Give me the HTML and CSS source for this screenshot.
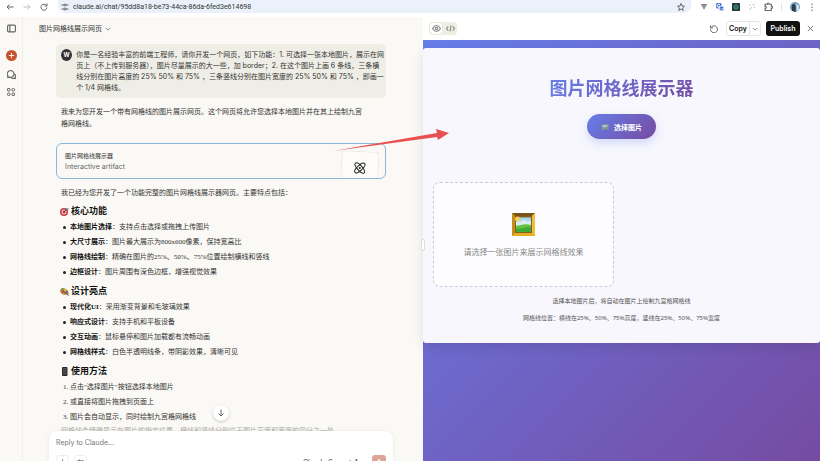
FILE: index.html
```html
<!DOCTYPE html>
<html lang="zh-CN">
<head>
    <meta charset="UTF-8">
    <meta name="viewport" content="width=device-width, initial-scale=1.0">
    <title>图片网格线展示网页</title>
    <link rel="stylesheet" href="styles.css">
</head>
<body>

    <!-- Browser bar -->
    <div class="browser-bar">
        <button class="icon-btn" aria-label="Back"><svg width="8" height="8" viewBox="0 0 16 16"><path d="M15 8H2M7 3L2 8l5 5"/></svg></button>
        <button class="icon-btn faded" aria-label="Forward"><svg width="8" height="8" viewBox="0 0 16 16"><path d="M1 8h13M9 3l5 5-5 5"/></svg></button>
        <button class="icon-btn" aria-label="Reload"><svg width="8" height="8" viewBox="0 0 16 16"><path d="M13 5a6 6 0 1 0 1 4M14 1v5H9"/></svg></button>
        <div class="url-box">
            <svg width="8" height="8" viewBox="0 0 16 16"><path d="M1 4h5M10 4h5M1 12h5M10 12h5"/><circle cx="8" cy="4" r="2"/><circle cx="8" cy="12" r="2"/></svg>
            <input type="text" class="url" aria-label="Address" value="claude.ai/chat/95dd8a18-be73-44ca-86da-6fed3e614698">
            <svg width="8" height="8" viewBox="0 0 16 16"><path d="M8 1l2 5 5 .500-4 3.500 1.500 5L8 12l-4.500 3L5 10 1 6.500 6 6z"/></svg>
        </div>
        <div class="extensions">
            <svg width="8" height="8" viewBox="0 0 16 16"><path d="M1 2h4l3 5 3-5h4L8 14z" fill="#999" stroke="none"/><path d="M5 2h2l1 2 1-2h2L8 7z" fill="#555" stroke="none"/></svg>
            <svg width="8" height="8" viewBox="0 0 16 16"><rect width="11" height="11" rx="2" fill="#4a7fe0" stroke="none"/><rect x="6" y="6" width="10" height="10" rx="2" fill="#c5d6f5" stroke="none"/><path d="M8 4a3 3 0 1 0 0 3H6" stroke="#fff"/><path d="M8 9h6M11 8v1c0 2-1 4-3 5M9 10l5 4" stroke="#3b6bc4"/></svg>
            <svg width="8" height="8" viewBox="0 0 16 16"><rect width="16" height="16" rx="1" fill="#203a3d" stroke="none"/><circle cx="8" cy="8" r="4" stroke="#2fa58e"/><circle cx="8" cy="8" r="1" fill="#2fa58e"/></svg>
            <svg class="faded" width="8" height="8" viewBox="0 0 16 16"><path d="M2 3l3 2M9 3l4 0M8 8l-5 6M13 7v3"/></svg>
            <svg width="9" height="9" viewBox="0 0 16 16"><path d="M2 4h4c-1-3 4-3 3 0h4v4c3-1 3 4 0 3v4H2v-4c3 1 3-4 0-3z"/></svg>
            <span class="bar-divider"></span>
            <svg width="10" height="10" viewBox="0 0 16 16"><circle cx="8" cy="8" r="8" fill="#76a3bd" stroke="none"/><path d="M3 14V7c0-5 6-5 6 0v9z" fill="#2d3b48" stroke="none"/><path d="M10 3l4 2v7l-3 3z" fill="#dde8ed" stroke="none"/></svg>
            <button class="icon-btn" aria-label="Menu"><svg width="8" height="8" viewBox="0 0 16 16"><path d="M8 1v3M8 7v3M8 13v3"/></svg></button>
        </div>
    </div>

    <div class="container">
        <!-- Sidebar -->
        <nav class="sidebar">
            <button class="icon-btn" aria-label="Toggle sidebar"><svg width="9" height="9" viewBox="0 0 16 16"><rect x="1" y="2" width="14" height="12" rx="2"/><path d="M5 2v12"/></svg></button>
            <button class="new-chat" aria-label="New chat"><svg width="7" height="7" viewBox="0 0 16 16"><path d="M8 2v12M2 8h12"/></svg></button>
            <button class="icon-btn" aria-label="Chats"><svg width="9" height="9" viewBox="0 0 16 16"><path d="M2 11a6 6 0 1 1 4 2H1zM13 7c3 2 3 5 1 6l1 2h-4c-2 0-3-1-4-2"/></svg></button>
            <button class="icon-btn" aria-label="Artifacts"><svg width="8" height="8" viewBox="0 0 16 16"><rect x="1" y="1" width="5" height="5" rx="1"/><rect x="10" y="1" width="5" height="5" rx="2"/><rect x="1" y="10" width="5" height="5" rx="2"/><rect x="10" y="10" width="5" height="5" rx="1"/></svg></button>
        </nav>

        <!-- Chat -->
        <main class="chat">
            <header class="chat-header">
                <button class="chat-title">图片网格线展示网页 <svg width="6" height="6" viewBox="0 0 16 16"><path d="M2 5l6 6 6-6"/></svg></button>
            </header>

            <div class="messages">
                <div class="user-message">
                    <span class="avatar">W</span>
                    <p>你是一名经验丰富的前端工程师，请你开发一个网页，如下功能：1. 可选择一张本地图片，展示在网<br>页上（不上传到服务器），图片尽量展示的大一些，加 border；2. 在这个图片上画 6 条线，三条横<br>线分别在图片高度的 25% 50% 和 75% ，三条竖线分别在图片宽度的 25% 50% 和 75% ，即画一<br>个 1/4 网格线。</p>
                </div>

                <div class="reply">
                    <p>我来为您开发一个带有网格线的图片展示网页。这个网页将允许您选择本地图片并在其上绘制九宫<br>格网格线。</p>

                    <button class="artifact-card">
                        <span class="artifact-info">
                            <span class="artifact-name">图片网格线展示器</span>
                            <span class="artifact-type">Interactive artifact</span>
                        </span>
                        <span class="artifact-thumb">
                            <svg width="12" height="12" viewBox="0 0 24 24"><ellipse cx="12" cy="12" rx="13" ry="5" transform="rotate(45 12 12)"/><ellipse cx="12" cy="12" rx="13" ry="5" transform="rotate(-45 12 12)"/><circle cx="12" cy="12" r="1"/></svg>
                        </span>
                    </button>

                    <p>我已经为您开发了一个功能完整的图片网格线展示器网页。主要特点包括：</p>

                    <h3>
                        <svg class="emoji" width="9" height="9" viewBox="0 0 18 18"><circle cx="8" cy="10" r="8" fill="#c8373b"/><circle cx="8" cy="10" r="5" fill="#f3d9d6"/><circle cx="8" cy="10" r="3" fill="#c8373b"/><path d="M8 10l6-6" stroke="#4b3a35" stroke-width="2"/><path d="M12 5l1-4 2 2 3 0-3 4z" fill="#4c91ba"/></svg>
                        核心功能
                    </h3>
                    <ul>
                        <li><strong>本地图片选择</strong>：支持点击选择或拖拽上传图片</li>
                        <li><strong>大尺寸展示</strong>：图片最大展示为800x600像素，保持宽高比</li>
                        <li><strong>网格线绘制</strong>：精确在图片的25%、50%、75%位置绘制横线和竖线</li>
                        <li><strong>边框设计</strong>：图片周围有深色边框，增强视觉效果</li>
                    </ul>

                    <h3>
                        <svg class="emoji" width="9" height="9" viewBox="0 0 18 18"><path d="M1 5c3-5 11-3 15 3 3 5 1 8-2 7-2-1-3-1-4 1C6 17-2 11 1 5z" fill="#c18847"/><circle cx="5" cy="5" r="2" fill="#3f9b55"/><circle cx="10" cy="6" r="2" fill="#e9c63c"/><circle cx="4" cy="10" r="2" fill="#ce4336"/><circle cx="14" cy="10" r="2" fill="#456db5"/><path d="M6 8l11 9" stroke="#70422e" stroke-width="2"/></svg>
                        设计亮点
                    </h3>
                    <ul>
                        <li><strong>现代化UI</strong>：采用渐变背景和毛玻璃效果</li>
                        <li><strong>响应式设计</strong>：支持手机和平板设备</li>
                        <li><strong>交互动画</strong>：鼠标悬停和图片加载都有流畅动画</li>
                        <li><strong>网格线样式</strong>：白色半透明线条，带阴影效果，清晰可见</li>
                    </ul>

                    <h3>
                        <svg class="emoji" width="9" height="9" viewBox="0 0 18 18"><rect x="4" width="11" height="18" rx="2" fill="#262626"/><rect x="6" y="2" width="7" height="13" fill="#555"/><path d="M7 5h5M7 8h5M7 11h5" stroke="#222" stroke-width="1"/></svg>
                        使用方法
                    </h3>
                    <ol>
                        <li>点击"选择图片"按钮选择本地图片</li>
                        <li>或直接将图片拖拽到页面上</li>
                        <li>图片会自动显示，同时绘制九宫格网格线</li>
                    </ol>
                    <p class="closing">网格线会精确显示在图片的指定位置，横线和竖线分别位于图片高度和宽度的四分之一处。</p>
                </div>
                <button class="scroll-down" aria-label="Scroll to bottom"><svg width="8" height="8" viewBox="0 0 16 16"><path d="M8 1v13M3 9l5 5 5-5"/></svg></button>
            </div>

            <form class="composer">
                <input type="text" aria-label="Message" placeholder="Reply to Claude...">
                <div class="composer-tools">
                    <button type="button" class="tool" aria-label="Add"><svg width="7" height="7" viewBox="0 0 16 16"><path d="M8 1v14M1 8h14"/></svg></button>
                    <button type="button" class="tool" aria-label="Tools"><svg width="7" height="7" viewBox="0 0 16 16"><path d="M1 4h14M1 11h14M5 1v6M11 8v6"/></svg></button>
                    <button type="button" class="model">Claude Sonnet 4</button>
                    <button type="submit" class="send" aria-label="Send"><svg width="8" height="8" viewBox="0 0 16 16"><path d="M8 15V3M3 8l5-5 5 5"/></svg></button>
                </div>
            </form>
        </main>

        <!-- Artifact -->
        <section class="artifact">
            <header class="artifact-header">
                <div class="view-toggle">
                    <button class="active" aria-label="Preview"><svg width="9" height="9" viewBox="0 0 16 16"><path d="M1 8c4-7 10-7 14 0-4 7-10 7-14 0z"/><circle cx="8" cy="8" r="2"/></svg></button>
                    <button aria-label="Code"><svg width="9" height="9" viewBox="0 0 16 16"><path d="M4 4L1 8l3 4M12 4l3 4-3 4M9 3L7 13"/></svg></button>
                </div>
                <button class="icon-btn refresh" aria-label="Refresh"><svg width="8" height="8" viewBox="0 0 16 16"><path d="M2 5a7 7 0 1 1-1 4M1 1v5h5"/></svg></button>
                <div class="copy-group">
                    <button>Copy</button>
                    <button class="copy-more" aria-label="Copy options"><svg width="6" height="6" viewBox="0 0 16 16"><path d="M2 5l6 6 6-6"/></svg></button>
                </div>
                <button class="publish">Publish</button>
                <button class="icon-btn" aria-label="Close"><svg width="7" height="7" viewBox="0 0 16 16"><path d="M2 2l12 12M14 2L2 14"/></svg></button>
            </header>

            <div class="preview">
                <div class="preview-panel">
                    <h1>图片网格线展示器</h1>
                    <button class="pick-btn">
                        <svg class="emoji" width="8" height="8" viewBox="0 0 16 16"><path d="M1 3l14-1v10L2 14z" fill="#839aa5"/><path d="M2 5l11-1-5 6z" fill="#bfd0c6"/><path d="M2 13l6-5 6 4z" fill="#6d9b83"/></svg>
                        选择图片
                    </button>
                    <div class="drop-zone">
                        <svg class="emoji" width="23" height="23" viewBox="0 0 46 46"><rect width="46" height="46" rx="2" fill="#e8ac25"/><path d="M0 0h46l-6 6H6z" fill="#7b5316"/><path d="M0 0l6 6v34l-6 6z" fill="#c78d1c"/><path d="M46 0v46l-6-6V6z" fill="#f1bd3a"/><rect x="6" y="6" width="34" height="34" fill="#82601f"/><rect x="8" y="9" width="30" height="29" fill="#a8d8ed"/><circle cx="11" cy="12" r="5" fill="#f4cf55"/><path d="M8 19c4-5 7-1 10-2s5-6 9-2 5-1 11 2v8H8z" fill="#d9edf2"/><path d="M8 26c10-2 18-6 30-2v14H8z" fill="#66c044"/><path d="M8 31c12 1 20-4 30-3v10H8z" fill="#3fa934"/></svg>
                        <p>请选择一张图片来展示网格线效果</p>
                    </div>
                    <div class="hints">
                        <p>选择本地图片后，将自动在图片上绘制九宫格网格线</p>
                        <p>网格线位置：横线在25%、50%、75%高度，竖线在25%、50%、75%宽度</p>
                    </div>
                </div>
            </div>
            <span class="resize-handle"></span>
        </section>

        <!-- Arrow from the artifact card to the preview -->
        <svg class="pointer-arrow" width="116" height="28" viewBox="0 0 116 28"><path d="M0 24L104 6l-1-4 13 4-11 7-1-3z"/></svg>
    </div>

</body>
</html>
```
FILE: styles.css
```css
* {
    box-sizing: border-box;
}
body {
    font-family: Inter, "Noto Sans CJK SC", sans-serif;
    font-size: 7px;
    margin: 0;
    height: 100vh;
    display: flex;
    flex-direction: column;
    overflow: hidden;
    color: #333;
    background-color: #faf9f5;
}
h1, h3, p, ul, ol {
    margin: 0;
    padding: 0;
}
button, input {
    font: inherit;
    color: inherit;
    border: none;
    padding: 0;
    background: none;
}
button {
    display: flex;
    align-items: center;
    justify-content: center;
    cursor: pointer;
}
svg {
    display: block;
    flex-shrink: 0;
    fill: none;
    stroke: #666;
    stroke-width: 2;
}
.emoji {
    stroke: none;
}
.faded {
    opacity: 0.4;
}

/* Browser bar */
.browser-bar {
    display: flex;
    gap: 9px;
    height: 17px;
    padding: 0 4px 4px 6px;
    background-color: #fff;
    flex-shrink: 0;
}
.url-box {
    flex: 1;
    display: flex;
    align-items: center;
    gap: 4px;
    margin-left: 1px;
    padding: 0 6px 0 3px;
    background-color: #eaf1fb;
    border-radius: 0 0 7px 7px;
}
.url {
    flex: 1;
    min-width: 0;
    outline: none;
    font-family: Roboto, sans-serif;
}
.extensions {
    display: flex;
    align-items: center;
    gap: 8px;
}
.bar-divider {
    width: 1px;
    height: 8px;
    background-color: #dde3ea;
}

.container {
    flex: 1;
    min-height: 0;
    position: relative;
    display: grid;
    grid-template-columns: 23px minmax(0, 400fr) minmax(0, 397fr);
    grid-template-rows: minmax(0, 1fr);
}

/* Sidebar */
.sidebar {
    display: flex;
    flex-direction: column;
    align-items: center;
    gap: 9px;
    padding-top: 7px;
    border-right: 1px solid #efeee9;
}
.new-chat {
    width: 11px;
    height: 11px;
    margin-top: 8px;
    border-radius: 50%;
    background-color: #c6532f;
}
.new-chat svg {
    stroke: #fff;
}

/* Chat */
.chat {
    display: flex;
    flex-direction: column;
    min-height: 0;
    padding-right: 4px;
}
.chat-header {
    height: 27px;
    padding: 5px 16px;
    flex-shrink: 0;
}
.chat-title {
    gap: 3px;
    line-height: 14px;
}
.messages {
    position: relative;
    flex: 1;
    min-height: 0;
    overflow: hidden;
}
.user-message,
.reply {
    width: 330px;
    max-width: 100%;
    margin: 0 auto;
}
.user-message {
    display: flex;
    gap: 4px;
    padding: 5px 2px 5px 5px;
    line-height: 11px;
    white-space: nowrap;
    border-radius: 5px;
    background-color: #efeee6;
}
.avatar {
    width: 12px;
    height: 12px;
    line-height: 12px;
    font-size: 6px;
    font-weight: bold;
    text-align: center;
    color: #fff;
    border-radius: 50%;
    background-color: #333;
}
.reply {
    padding-top: 8px;
    font-family: "Liberation Serif", "Noto Sans CJK SC", serif;
}
.reply > p {
    padding: 0 5px;
    line-height: 12px;
}
.artifact-card {
    width: 100%;
    height: 36px;
    margin: 13px 0 8px;
    padding: 0 6px 0 8px;
    justify-content: space-between;
    overflow: hidden;
    text-align: left;
    font-family: Inter, "Noto Sans CJK SC", sans-serif;
    border: 1px solid #8ab8d8;
    border-radius: 6px;
}
.artifact-info {
    display: flex;
    flex-direction: column;
    line-height: 11px;
}
.artifact-name {
    font-size: 6px;
}
.artifact-type {
    color: #666;
}
.artifact-thumb {
    align-self: flex-end;
    width: 38px;
    height: 27px;
    padding: 10px 12px 0;
    border: 1px solid #eae9e4;
    border-bottom: none;
    border-radius: 4px 4px 0 0;
    background-color: #fdfcfa;
    transform: rotate(3deg);
}
.artifact-thumb svg {
    overflow: visible;
    stroke: #222;
}
h3 {
    display: flex;
    align-items: center;
    gap: 2px;
    margin-top: 3px;
    padding: 0 4px;
    font-size: 9px;
    line-height: 17px;
    color: #111;
}
.reply > p + h3 {
    margin-top: 4px;
}
ul, ol {
    padding-left: 14px;
    line-height: 15px;
}
ul {
    list-style: none;
}
ul li {
    position: relative;
}
ul li::before {
    content: "";
    position: absolute;
    left: -7px;
    top: 6px;
    width: 3px;
    height: 3px;
    border-radius: 50%;
    background-color: #222;
}
li strong {
    color: #111;
}
.reply .closing {
    white-space: nowrap;
    color: #aaa;
}
.scroll-down {
    position: absolute;
    left: 50%;
    bottom: 10px;
    width: 16px;
    height: 16px;
    margin-left: -8px;
    border-radius: 50%;
    background-color: #fff;
    box-shadow: 0 1px 3px rgba(0, 0, 0, 0.2);
}
.composer {
    width: 344px;
    max-width: 100%;
    height: 50px;
    margin: 0 auto -20px;
    padding: 4px 7px;
    flex-shrink: 0;
    border-radius: 8px;
    background-color: #fff;
    box-shadow: 0 1px 5px rgba(0, 0, 0, 0.08);
}
.composer input {
    display: block;
    width: 100%;
    height: 14px;
    outline: none;
}
.composer input::placeholder {
    color: #777;
}
.composer-tools {
    display: flex;
    gap: 5px;
    margin-top: 6px;
}
.tool {
    width: 13px;
    height: 14px;
    border: 1px solid #eee;
    border-radius: 3px;
}
.model {
    margin-left: auto;
}
.send {
    width: 14px;
    height: 14px;
    margin-left: 9px;
    border-radius: 3px;
    background-color: #dda598;
}
.send svg {
    stroke: #fff;
}

/* Artifact */
.artifact {
    position: relative;
    display: flex;
    flex-direction: column;
    min-height: 0;
    background-color: #fff;
}
.artifact-header {
    display: flex;
    align-items: center;
    height: 23px;
    padding: 0 6px;
    gap: 5px;
    flex-shrink: 0;
}
.view-toggle {
    display: flex;
    border-radius: 4px;
    background-color: #eeeee2;
}
.view-toggle button {
    width: 14px;
    height: 13px;
}
.view-toggle .active {
    border: 1px solid #e8e8e0;
    border-radius: 4px;
    background-color: #fff;
}
.view-toggle svg {
    stroke: #888;
}
.refresh {
    margin-left: auto;
    margin-right: 3px;
}
.copy-group {
    display: flex;
    height: 15px;
    font-weight: 600;
    color: #111;
    border: 1px solid #e6e5e0;
    border-radius: 3px;
}
.copy-group button {
    width: 22px;
}
.copy-group .copy-more {
    width: 11px;
    border-left: 1px solid #e6e5e0;
}
.publish {
    width: 34px;
    height: 15px;
    margin-right: 2px;
    font-weight: 600;
    color: #fff;
    border-radius: 3px;
    background-color: #111;
}
.preview {
    flex: 1;
    padding-top: 8px;
    font-family: "Noto Sans", "Noto Sans CJK SC", sans-serif;
    background: linear-gradient(135deg, #667eea 0%, #764ba2 100%);
}
.preview-panel {
    display: flex;
    flex-direction: column;
    align-items: center;
    padding: 28px 10px 16px;
    border-radius: 3px;
    background-color: #f7f7fd;
    box-shadow: 0 4px 12px rgba(0, 0, 0, 0.1);
}
h1 {
    font-size: 18px;
    line-height: 24px;
    color: transparent;
    background: linear-gradient(135deg, #667eea, #764ba2);
    background-clip: text;
    -webkit-background-clip: text;
}
.pick-btn {
    height: 25px;
    margin-top: 14px;
    padding: 0 14px;
    gap: 5px;
    font-weight: bold;
    color: #fff;
    border-radius: 13px;
    background: linear-gradient(135deg, #667eea, #764ba2);
    box-shadow: 0 4px 8px rgba(102, 126, 234, 0.25);
}
.drop-zone {
    align-self: flex-start;
    display: flex;
    flex-direction: column;
    align-items: center;
    width: 48%;
    height: 105px;
    margin-top: 43px;
    padding-top: 30px;
    gap: 9px;
    font-size: 8px;
    line-height: 14px;
    color: #888;
    border: 1px dashed #c9c9dc;
    border-radius: 7px;
    background-color: #fdfdff;
}
.hints {
    margin-top: 6px;
    font-size: 6px;
    line-height: 17px;
    text-align: center;
    color: #555;
}
.resize-handle {
    position: absolute;
    left: -2px;
    top: 50%;
    width: 4px;
    height: 12px;
    border: 1px solid #ddd;
    border-radius: 2px;
    background-color: #fff;
}
.pointer-arrow {
    position: absolute;
    left: 333px;
    top: 110px;
    fill: #e94f4f;
    stroke: none;
}
```
